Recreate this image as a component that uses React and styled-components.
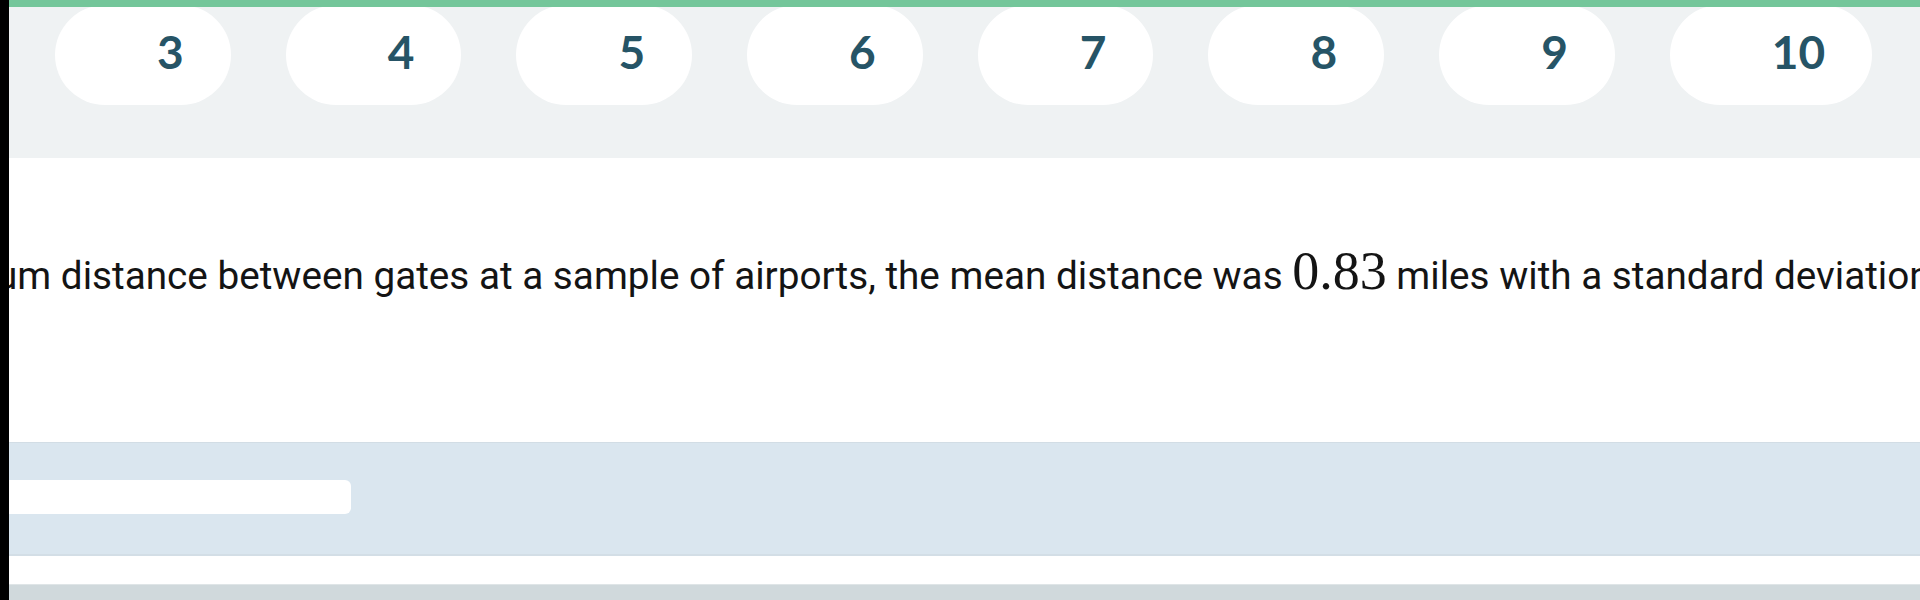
import styled, { createGlobalStyle } from 'styled-components';

const GlobalStyle = createGlobalStyle`
  html, body {
    margin: 0;
    padding: 0;
    background: #ffffff;
    overflow: hidden;
  }
  body {
    font-family: Roboto, "Liberation Sans", sans-serif;
  }
`

const Page = styled.div`
  position: relative;
  width: 1920px;
  height: 600px;
  overflow: hidden;
  background: #ffffff;
`

const EdgeShadow = styled.div`
  position: absolute;
  left: 0;
  top: 0;
  bottom: 0;
  width: 9px;
  background: #000000;
  z-index: 5;
`

const TopBar = styled.div`
  position: relative;
  z-index: 2;
  height: 7px;
  background: #74c69a;
`

const PagerStrip = styled.div`
  background: #eff2f3;
  height: 151px;
  display: flex;
  align-items: flex-start;
  gap: 55px;
  padding-left: 55px;
`

const PagerPill = styled.div`
  flex: none;
  margin-top: -2px;
  height: 100px;
  box-sizing: border-box;
  border-radius: 50px;
  background: #ffffff;
  padding: 0 47px 7px 102px;
  display: flex;
  align-items: center;
  justify-content: center;
  font-family: Lato, "Open Sans", sans-serif;
  font-weight: 700;
  font-size: 46px;
  color: #265466;
`

const Question = styled.section`
  height: 284px;
  padding-top: 86px;
  box-sizing: border-box;
`

const QuestionText = styled.p`
  margin: 0 0 0 -4px;
  white-space: nowrap;
  font-size: 38.7px;
  line-height: 60px;
  color: #141414;
`

const MathNum = styled.span`
  font-family: "Liberation Serif", "DejaVu Serif", serif;
  font-size: 54px;
  line-height: 1;
`

const AnswerBand = styled.div`
  height: 114px;
  box-sizing: border-box;
  background: #dae6ef;
  border-top: 1px solid #d2dde5;
  border-bottom: 2px solid #d3dee6;
  padding-top: 37px;
`

const AnswerInput = styled.div`
  width: 351px;
  height: 34px;
  background: #ffffff;
  border-radius: 0 6px 6px 0;
`

const Spacer = styled.div`
  height: 28px;
`

const Footer = styled.div`
  height: 40px;
  background: #d0d9dc;
  border-top: 1px solid #dfe5e7;
`

const pages = [3, 4, 5, 6, 7, 8, 9, 10];

function App() {
  return (
    <Page>
      <GlobalStyle />
      <EdgeShadow />
      <TopBar />
      <PagerStrip>
        {pages.map((n) => <PagerPill key={n}>{n}</PagerPill>)}
      </PagerStrip>

      <Question>
        <QuestionText>
          um distance between gates at a sample of airports, the mean distance was <MathNum>0.83</MathNum> miles with a standard deviation of <MathNum>0.51</MathNum> miles.
        </QuestionText>
      </Question>

      <AnswerBand>
        <AnswerInput />
      </AnswerBand>
      <Spacer />
      <Footer />
    </Page>
  );
}

export default App;
